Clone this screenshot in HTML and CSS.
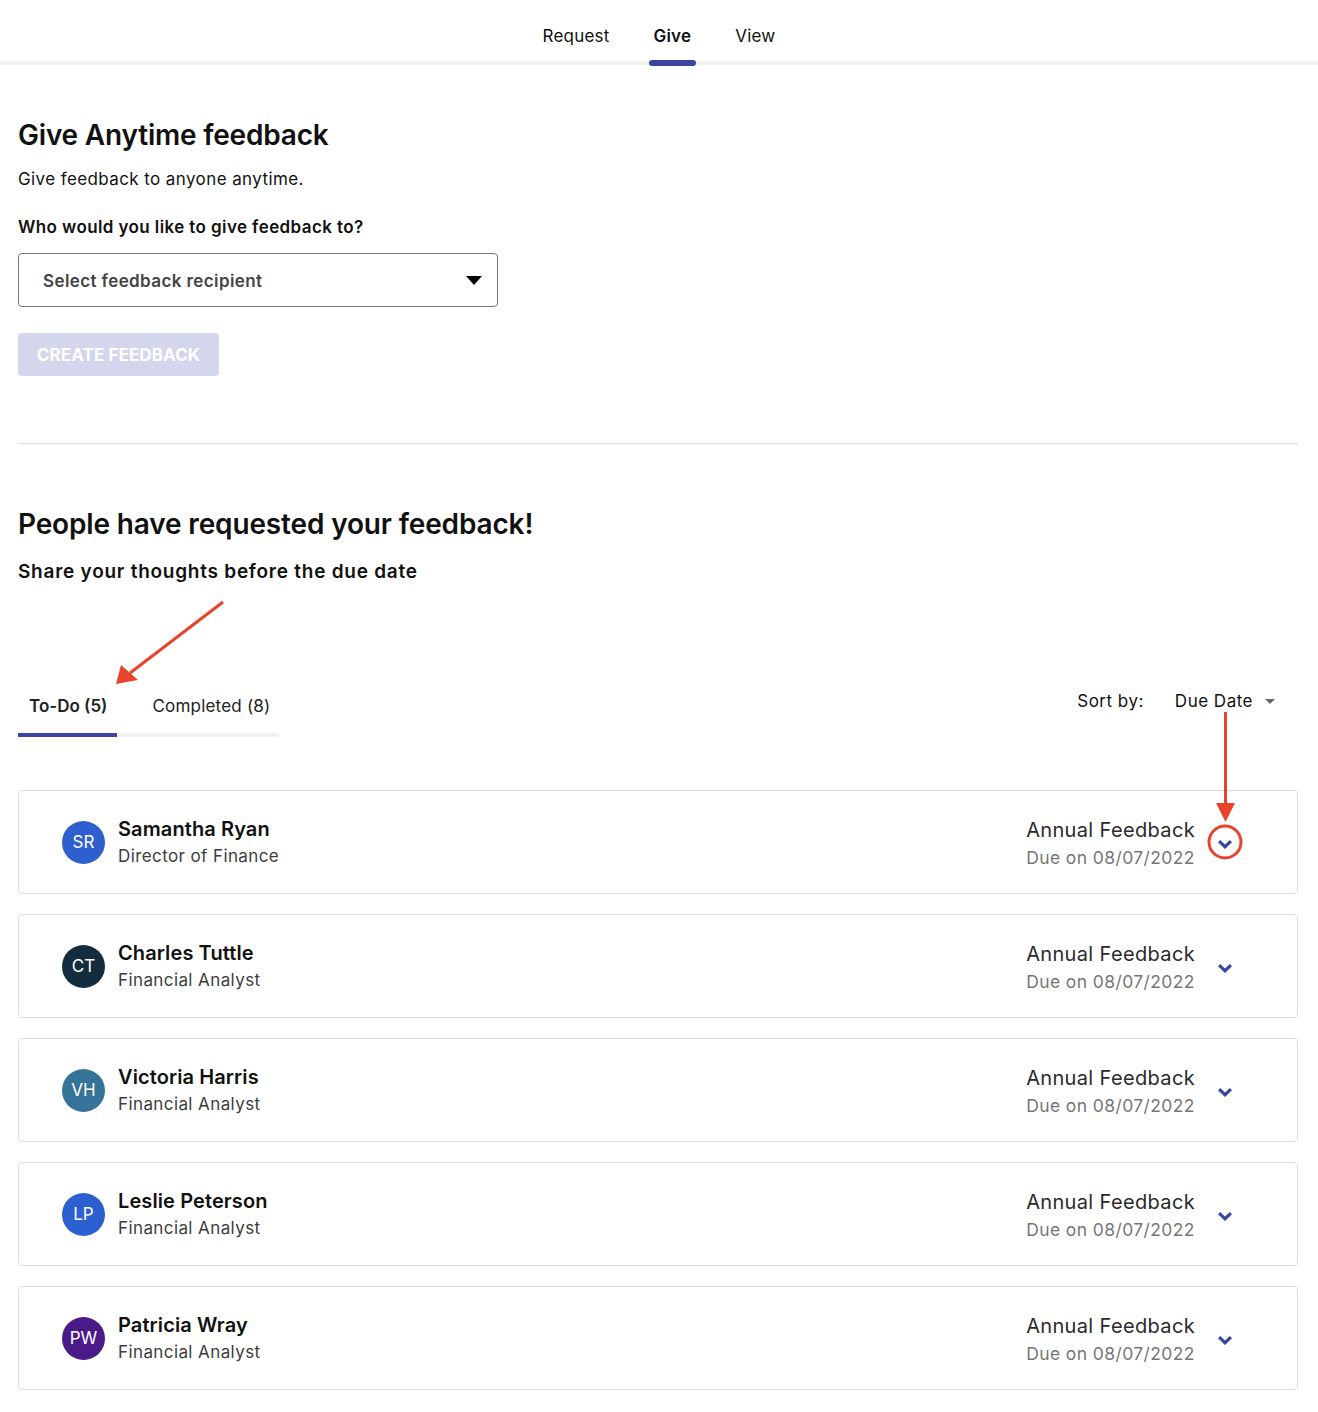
FILE: index.html
```html
<!DOCTYPE html>
<html lang="en">
<head>
	<meta charset="UTF-8">
	<title>Give feedback</title>
	<link rel="stylesheet" href="styles.css">
</head>
<body>
	<nav class="topnav">
		<a href="#">Request</a>
		<a href="#" class="active">Give</a>
		<a href="#">View</a>
	</nav>

	<main class="page">
		<section class="anytime">
			<h1>Give Anytime feedback</h1>
			<p class="lead">Give feedback to anyone anytime.</p>
			<label class="ask">Who would you like to give feedback to?</label>
			<div class="select">
				<span>Select feedback recipient</span>
				<svg width="16" height="9" viewBox="0 0 16 9"><path d="M0 0H16L8 9Z" fill="#000"/></svg>
			</div>
			<button class="btn-create" disabled>CREATE FEEDBACK</button>
		</section>

		<hr class="divider">

		<section class="requests">
			<h2>People have requested your feedback!</h2>
			<p class="sub">Share your thoughts before the due date</p>

			<div class="toolbar">
				<div class="tabs">
					<div class="tab active">To-Do (5)</div>
					<div class="tab">Completed (8)</div>
				</div>
				<div class="sort">
					<span class="sort-label">Sort by:</span>
					<span class="sort-value">Due Date</span>
					<svg width="10" height="5" viewBox="0 0 10 5"><path d="M0 0H10L5 5Z" fill="#666"/></svg>
				</div>
			</div>

			<div class="list">
				<div class="card">
					<div class="avatar av-sr">SR</div>
					<div class="who">
						<div class="name">Samantha Ryan</div>
						<div class="role">Director of Finance</div>
					</div>
					<div class="due">
						<div class="type">Annual Feedback</div>
						<div class="date">Due on 08/07/2022</div>
					</div>
					<svg class="chev" width="14" height="9" viewBox="0 0 14 9"><path d="M0 2.2L2.2 0L7 4.6L11.8 0L14 2.2L7 9Z" fill="#3b46a3"/></svg>
				</div>
				<div class="card">
					<div class="avatar av-ct">CT</div>
					<div class="who">
						<div class="name">Charles Tuttle</div>
						<div class="role">Financial Analyst</div>
					</div>
					<div class="due">
						<div class="type">Annual Feedback</div>
						<div class="date">Due on 08/07/2022</div>
					</div>
					<svg class="chev" width="14" height="9" viewBox="0 0 14 9"><path d="M0 2.2L2.2 0L7 4.6L11.8 0L14 2.2L7 9Z" fill="#3b46a3"/></svg>
				</div>
				<div class="card">
					<div class="avatar av-vh">VH</div>
					<div class="who">
						<div class="name">Victoria Harris</div>
						<div class="role">Financial Analyst</div>
					</div>
					<div class="due">
						<div class="type">Annual Feedback</div>
						<div class="date">Due on 08/07/2022</div>
					</div>
					<svg class="chev" width="14" height="9" viewBox="0 0 14 9"><path d="M0 2.2L2.2 0L7 4.6L11.8 0L14 2.2L7 9Z" fill="#3b46a3"/></svg>
				</div>
				<div class="card">
					<div class="avatar av-lp">LP</div>
					<div class="who">
						<div class="name">Leslie Peterson</div>
						<div class="role">Financial Analyst</div>
					</div>
					<div class="due">
						<div class="type">Annual Feedback</div>
						<div class="date">Due on 08/07/2022</div>
					</div>
					<svg class="chev" width="14" height="9" viewBox="0 0 14 9"><path d="M0 2.2L2.2 0L7 4.6L11.8 0L14 2.2L7 9Z" fill="#3b46a3"/></svg>
				</div>
				<div class="card">
					<div class="avatar av-pw">PW</div>
					<div class="who">
						<div class="name">Patricia Wray</div>
						<div class="role">Financial Analyst</div>
					</div>
					<div class="due">
						<div class="type">Annual Feedback</div>
						<div class="date">Due on 08/07/2022</div>
					</div>
					<svg class="chev" width="14" height="9" viewBox="0 0 14 9"><path d="M0 2.2L2.2 0L7 4.6L11.8 0L14 2.2L7 9Z" fill="#3b46a3"/></svg>
				</div>
			</div>
		</section>
	</main>

	<!-- annotation arrows drawn over the screenshot -->
	<svg class="notes" width="1318" height="1412" viewBox="0 0 1318 1412">
		<line x1="223" y1="602" x2="130" y2="673" stroke="#e8432c" stroke-width="3"/>
		<path d="M116 684L121 665L138 680Z" fill="#e8432c"/>
		<line x1="1225.5" y1="712" x2="1225.5" y2="806" stroke="#e8432c" stroke-width="3"/>
		<path d="M1216 803H1235L1225.5 822Z" fill="#e8432c"/>
		<circle cx="1225" cy="842" r="16" fill="none" stroke="#e8432c" stroke-width="3"/>
	</svg>
</body>
</html>
```

FILE: styles.css
```css
*{margin:0; padding:0; box-sizing:border-box;}
body{
	font-family: Inter, "Open Sans", sans-serif;
	color:#111;
	background:#fff;
	letter-spacing:0.4px;
	position: relative;
}
.topnav{
	display:flex;
	justify-content:center;
	gap:34px;
	height:65px;
	border-bottom:solid 4px #f2f2f5;
}
.topnav a{
	position:relative;
	padding:26px 5px 0 5px;
	font-size:17px;
	line-height:20px;
	color:#111;
	text-decoration:none;
	letter-spacing:0.2px;
}
.topnav a.active{font-weight:600;}
.topnav a.active:after{
	content:"";
	position:absolute;
	left:0;
	right:0;
	bottom:-5px;
	height:6px;
	border-radius:3px;
	background:#3b46a3;
}
.page{padding:0 20px 0 18px;}
.anytime{padding-top:53px;}
.anytime h1{
	font-size:28px;
	line-height:34px;
	font-weight:600;
	letter-spacing:-0.2px;
}
.lead{
	margin-top:15px;
	font-size:17px;
	line-height:24px;
}
.ask{
	display:block;
	margin-top:24px;
	font-size:17px;
	line-height:24px;
	font-weight:600;
}
.select{
	display:flex;
	align-items:center;
	justify-content:space-between;
	width:480px;
	height:54px;
	margin-top:14px;
	padding:0 15px 0 24px;
	border:solid 1px #777;
	border-radius:4px;
	font-size:17px;
	font-weight:600;
	color:#444;
}
.select span{margin-top:2px;}
.btn-create{
	display:block;
	margin-top:26px;
	width:201px;
	height:43px;
	border:none;
	border-radius:4px;
	background:#d3d6ec;
	color:#fff;
	font-family:inherit;
	font-size:17px;
	font-weight:700;
	letter-spacing:0.1px;
}
.divider{
	margin-top:67px;
	border:none;
	border-top:solid 1px #ddd;
}
.requests h2{
	margin-top:63px;
	font-size:28px;
	line-height:34px;
	font-weight:600;
	letter-spacing:-0.15px;
}
.sub{
	margin-top:18px;
	font-size:19px;
	line-height:26px;
	font-weight:600;
	letter-spacing:0.75px;
}
.toolbar{
	display:flex;
	justify-content:space-between;
	align-items:flex-start;
	margin-top:109px;
}
.tabs{
	display:flex;
	gap:24px;
	border-bottom:solid 4px #f2f2f5;
}
.tab{
	padding:0 9px 15px 11px;
	margin-bottom:-4px;
	font-size:17px;
	line-height:24px;
	color:#222;
	letter-spacing:0.2px;
	border-bottom:solid 4px transparent;
}
.tab.active{
	font-weight:600;
	letter-spacing:0;
	padding-right:10px;
	border-bottom-color:#3b46a3;
}
.sort{
	display:flex;
	align-items:center;
	margin-top:-5px;
	padding-right:23px;
	font-size:17px;
	line-height:24px;
	color:#111;
	letter-spacing:0.5px;
}
.sort-label{margin-right:31px;}
.sort-value{margin-right:12px;}
.list{
	display:flex;
	flex-direction:column;
	gap:20px;
	margin-top:53px;
	padding-bottom:22px;
}
.card{
	display:flex;
	align-items:center;
	height:104px;
	padding:0 65px 0 43px;
	border:solid 1px #dcdce2;
	border-radius:4px;
}
.avatar{
	width:43px;
	height:43px;
	border-radius:50%;
	display:flex;
	align-items:center;
	justify-content:center;
	color:#fff;
	font-size:17px;
	letter-spacing:0;
	margin-right:13px;
}
.av-sr{background:#2e5fcf;}
.av-ct{background:#142d3e;}
.av-vh{background:#367399;}
.av-lp{background:#2c5fd0;}
.av-pw{background:#4a1b88;}
.who{flex:1;}
.name{
	font-size:20px;
	line-height:24px;
	font-weight:600;
	color:#111;
	letter-spacing:0.1px;
}
.role{
	margin-top:3px;
	font-size:17px;
	line-height:24px;
	color:#3d3d3d;
}
.due{margin:3px 23px 0 0;}
.type{
	font-size:20px;
	line-height:24px;
	color:#2a2a2a;
	letter-spacing:0.35px;
}
.date{
	margin-top:4px;
	font-size:17.5px;
	line-height:24px;
	color:#777;
}
.chev{flex:none; margin-top:4px;}
.notes{
	position:absolute;
	top:0;
	left:0;
	pointer-events:none;
}
```
